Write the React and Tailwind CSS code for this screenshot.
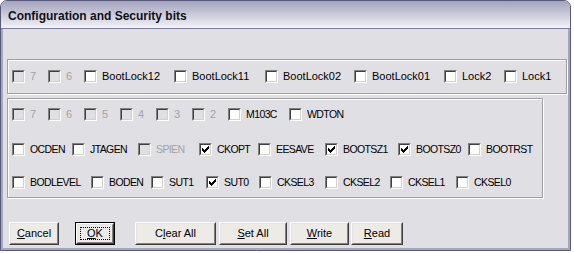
import React from 'react';

const row1 = [
  { label: '7', w: 36, disabled: true },
  { label: '6', w: 36, disabled: true },
  { label: 'BootLock12', w: 90 },
  { label: 'BootLock11', w: 91 },
  { label: 'BootLock02', w: 89 },
  { label: 'BootLock01', w: 90 },
  { label: 'Lock2', w: 60 },
  { label: 'Lock1', w: 50 },
];

const rowA = [
  { label: '7', w: 36, disabled: true },
  { label: '6', w: 36, disabled: true },
  { label: '5', w: 36, disabled: true },
  { label: '4', w: 36, disabled: true },
  { label: '3', w: 36, disabled: true },
  { label: '2', w: 36, disabled: true },
  { label: 'M103C', w: 61 },
  { label: 'WDTON', w: 60, clip: true },
];

const rowB = [
  { label: 'OCDEN', w: 60 },
  { label: 'JTAGEN', w: 66 },
  { label: 'SPIEN', w: 61, disabled: true },
  { label: 'CKOPT', w: 59, checked: true },
  { label: 'EESAVE', w: 67 },
  { label: 'BOOTSZ1', w: 73, checked: true },
  { label: 'BOOTSZ0', w: 70, checked: true },
  { label: 'BOOTRST', w: 62 },
];

const rowC = [
  { label: 'BODLEVEL', w: 79 },
  { label: 'BODEN', w: 60 },
  { label: 'SUT1', w: 55 },
  { label: 'SUT0', w: 53, checked: true },
  { label: 'CKSEL3', w: 66 },
  { label: 'CKSEL2', w: 65 },
  { label: 'CKSEL1', w: 66 },
  { label: 'CKSEL0', w: 60 },
];

// all-caps labels render narrower in the original dialog font
const isCaps = (s) => s.length > 1 && /^[A-Z0-9]+$/.test(s);

const CheckBox = ({ checked, disabled }) => (
  <span className="box-border block w-[13px] h-[13px] shrink-0 border border-t-[#808080] border-l-[#808080] border-b-white border-r-white">
    <span
      className={`box-border flex w-full h-full items-center justify-center border border-t-[#404040] border-l-[#404040] border-b-[#d4d0c8] border-r-[#d4d0c8] ${
        disabled ? 'bg-[#e0dfe3]' : 'bg-white'
      }`}
    >
      {checked && (
        <svg width="7" height="7" viewBox="0 0 7 7" shapeRendering="crispEdges">
          <polygon points="0,2 2,4 7,-1 7,2 2,7 0,5" fill="#000" />
        </svg>
      )}
    </span>
  </span>
);

const Item = ({ item }) => (
  <div className="flex items-center gap-[5px] shrink-0" style={{ width: item.w }}>
    <CheckBox checked={item.checked} disabled={item.disabled} />
    <span
      className={`leading-[13px] whitespace-nowrap ${item.disabled ? 'text-[#a3a2a6]' : 'text-black'} ${
        isCaps(item.label) ? 'text-[10.5px] tracking-[-0.6px]' : ''
      } ${item.clip ? 'w-[37px] overflow-hidden' : ''}`}
    >
      {item.label}
    </span>
  </div>
);

const Row = ({ items, className = '' }) => (
  <div className={`flex items-center h-[13px] ${className}`}>
    {items.map((item, i) => (
      <Item key={i} item={item} />
    ))}
  </div>
);

const Button = ({ children, className = '', isDefault }) => (
  <div className={`box-border h-[23px] shrink-0 ${isDefault ? 'border border-black' : ''} ${className}`}>
    <div className="box-border h-full border border-t-white border-l-white border-r-[#404040] border-b-[#404040]">
      <div className="relative box-border h-full flex items-center justify-center bg-[#ecebe6] border border-t-[#e3e3e3] border-l-[#e3e3e3] border-r-[#808080] border-b-[#808080]">
        <span className="leading-[13px] text-black">{children}</span>
        {isDefault && (
          <span className="absolute inset-x-[2px] inset-y-[2px] border border-dotted border-black" />
        )}
      </div>
    </div>
  </div>
);

const U = ({ children }) => <span className="underline underline-offset-[1px]">{children}</span>;

export default function App() {
  return (
    <div className="w-[574px] h-[253px] bg-white font-['Liberation_Sans',Arial,sans-serif] text-[11px]">
      <div className="box-border w-[571px] h-[251px] flex flex-col overflow-hidden rounded-t-[7px] border border-[#58587c] bg-[#e0dfe3]">
        {/* title bar */}
        <div className="h-[28px] shrink-0 flex items-center pl-[7px] pt-[3px] border-b border-[#7b7b9b] bg-gradient-to-b from-[#a3a3bd] via-[#cacad9] to-[#f3f3f7]">
          <span className="text-[12px] font-bold text-[#101018]">
            Configuration and Security bits
          </span>
        </div>

        {/* body */}
        <div className="flex-1 flex flex-col pl-[4px] pt-[30px] border-x-2 border-b-2 border-x-[#a6a6bf] border-b-[#a6a6bf]">
          <div className="box-border w-[560px] h-[35px] flex items-center pl-[4px] border border-[#a0a0a0] shadow-[inset_1px_1px_0_#fff,1px_1px_0_#fff]">
            <Row items={row1} />
          </div>

          <div className="box-border w-[536px] h-[100px] mt-[4px] flex flex-col pl-[4px] pt-[9px] border border-[#a0a0a0] shadow-[inset_1px_1px_0_#fff,1px_1px_0_#fff]">
            <Row items={rowA} />
            <Row items={rowB} className="mt-[22px]" />
            <Row items={rowC} className="mt-[20px]" />
          </div>

          <div className="flex mt-[24px] -ml-[1px]">
            <Button className="w-[50px] ml-[3px]">
              <U>C</U>ancel
            </Button>
            <Button className="w-[40px] ml-[16px]" isDefault>
              <U>O</U>K
            </Button>
            <Button className="w-[81px] ml-[20px]">
              C<U>l</U>ear All
            </Button>
            <Button className="w-[68px] ml-[3px]">
              <U>S</U>et All
            </Button>
            <Button className="w-[59px] ml-[3px]">
              <U>W</U>rite
            </Button>
            <Button className="w-[52px] ml-[2px]">
              <U>R</U>ead
            </Button>
          </div>
        </div>
      </div>
    </div>
  );
}
